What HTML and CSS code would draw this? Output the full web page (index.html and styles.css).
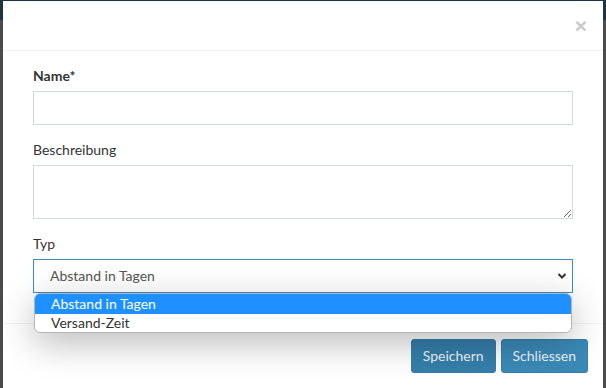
FILE: index.html
```html
<!DOCTYPE html>
<html>
<head>
	<meta charset="utf-8">
	<title>Typ bearbeiten</title>
	<link rel="stylesheet" href="styles.css">
</head>
<body>
	<div class="modal">
		<div class="modal-header">
			<span class="close">&times;</span>
		</div>
		<div class="modal-body">
			<div class="form-group">
				<label class="req">Name*</label>
				<input type="text" class="form-control">
			</div>
			<div class="form-group">
				<label>Beschreibung</label>
				<textarea class="form-control" rows="2"></textarea>
			</div>
			<div class="form-group select-wrap">
				<label>Typ</label>
				<div class="select-box">
					<select class="form-control select">
						<option>Abstand in Tagen</option>
						<option>Versand-Zeit</option>
					</select>
					<svg class="chevron" width="10" height="8" viewBox="0 0 10 8"><path d="M1.5 2 L5 5.5 L8.5 2" fill="none" stroke="#333" stroke-width="2"/></svg>
				</div>
				<ul class="options">
					<li class="active">Abstand in Tagen</li>
					<li>Versand-Zeit</li>
				</ul>
			</div>
		</div>
		<div class="modal-footer">
			<button class="btn btn-dark">Speichern</button>
			<button class="btn">Schliessen</button>
		</div>
	</div>
</body>
</html>
```

FILE: styles.css
```css
* {margin: 0; padding: 0; box-sizing: border-box;}
html, body {height: 100%; overflow: hidden;}
body {font-family: Lato, "Noto Sans", sans-serif; font-size: 14px; line-height: 20px; color: #333; background: linear-gradient(#1b3545 0, #1b3545 20px, #4b4b4b 20px);}

.modal {margin: 1px 3px 0; height: 400px; background: #fff;}
.modal-header {height: 50px; border-bottom: 1px solid #f2f2f2; padding: 14px 16px 0; text-align: right;}
.close {font-size: 21px; font-weight: bold; line-height: 21px; color: #c9c9c9; font-family: "Liberation Sans", sans-serif;}

/* body padding plus the last group's margin gives the 30px gap above the footer */
.modal-body {padding: 15px 30px;}
.form-group {margin-bottom: 15px;}
.form-group label {display: block; margin-bottom: 5px; font-weight: normal;}
.form-group label.req {font-weight: bold;}
.form-control {display: block; width: 100%; height: 34px; padding: 6px 12px; border: 1px solid #d2d6de; font: inherit; color: #555; background: #fff; outline: none; border-radius: 0;}
textarea.form-control {height: 54px; resize: vertical;}

.select-wrap {position: relative;}
.select-box {position: relative;}
.select {appearance: none; -webkit-appearance: none; border-color: #3c8dbc; padding-left: 16px;}
.chevron {position: absolute; right: 6px; top: 13px;}
.options {position: absolute; left: 1px; right: 1px; top: 59px; list-style: none; background: #fff; border: 1px solid #b5b5b5; border-radius: 6px; overflow: hidden; box-shadow: 0 10px 36px rgba(0,0,0,0.28); z-index: 5;}
.options li {padding: 0 16px; height: 18px; line-height: 18px;}
.options li.active {height: 20px; line-height: 20px; background: #1e90ff; color: #fff;}

.modal-footer {border-top: 1px solid #f2f2f2; padding: 15px; display: flex; justify-content: flex-end; gap: 5px;}
.btn {font: inherit; height: 34px; padding: 6px 11px; border: 1px solid #367fa9; border-radius: 3px; background: #3b8ab8; color: #eef4f8;}
.btn-dark {background: #357fab;}
```
